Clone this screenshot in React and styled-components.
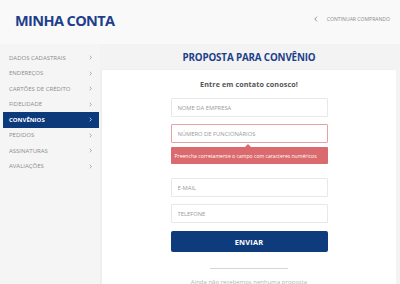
import React from 'react'
import styled, { createGlobalStyle } from 'styled-components'

const GlobalStyle = createGlobalStyle`
  html, body {
    margin: 0;
    padding: 0;
  }
  body {
    width: 400px;
    height: 284px;
    overflow: hidden;
    font-family: "Open Sans", "Liberation Sans", sans-serif;
    background: #f3f3f3;
  }
`

const Page = styled.div`
  width: 400px;
  height: 284px;
  display: flex;
  flex-direction: column;
`

const Header = styled.header`
  height: 44px;
  flex: none;
  background: #f9f9fa;
  display: flex;
  align-items: center;
  justify-content: space-between;
  padding: 0 10px 0 15px;
  box-sizing: border-box;
`

const Title = styled.h1`
  margin: 0 0 3px;
  font-size: 14.5px;
  font-weight: 700;
  color: #1d3f8b;
  letter-spacing: -0.6px;
`

const BackLink = styled.a`
  display: flex;
  align-items: center;
  gap: 9px;
  font-size: 5.1px;
  color: #8a8a8a;
  margin-bottom: 6px;
  text-transform: uppercase;
  svg {
    width: 4px;
    height: 6px;
  }
`

const Body = styled.div`
  flex: 1;
  display: flex;
  background: #f3f3f3;
  min-height: 0;
`

const Sidebar = styled.nav`
  width: 100px;
  flex: none;
  padding-top: 6px;
  display: flex;
  flex-direction: column;
  background: #f5f5f5;
`

const NavItem = styled.div`
  height: 15.5px;
  margin-left: 3px;
  width: 96px;
  box-sizing: border-box;
  padding: 0 6px 0 6px;
  display: flex;
  align-items: center;
  justify-content: space-between;
  font-size: 6px;
  letter-spacing: 0;
  text-transform: uppercase;
  background: ${p => (p.$active ? '#0c3a7b' : 'transparent')};
  color: ${p => (p.$active ? '#ffffff' : '#8d8d8d')};
  font-weight: ${p => (p.$active ? 700 : 400)};
  svg {
    width: 3px;
    height: 5px;
    margin-right: 1px;
  }
`

const Main = styled.main`
  flex: 1;
  display: flex;
  flex-direction: column;
  margin: 0 4px 0 2px;
  min-width: 0;
`

const SectionTitle = styled.h2`
  height: 26px;
  flex: none;
  margin: 0;
  display: flex;
  align-items: center;
  justify-content: center;
  font-size: 9.8px;
  font-weight: 700;
  color: #1d3f8b;
  letter-spacing: -0.15px;
`

const Panel = styled.section`
  flex: 1;
  background: #ffffff;
  display: flex;
  flex-direction: column;
  align-items: center;
  padding-top: 9px;
  box-shadow: -1px 0 2px rgba(0, 0, 0, 0.04);
`

const Lead = styled.p`
  margin: 0 0 9px;
  font-size: 7.2px;
  font-weight: 700;
  color: #555555;
  letter-spacing: 0.1px;
`

const Form = styled.form`
  width: 157px;
  display: flex;
  flex-direction: column;
  gap: 7px;
`

const Field = styled.input`
  height: 19px;
  box-sizing: border-box;
  border: 1px solid ${p => (p.$error ? '#e2a3a5' : '#e8e8e8')};
  border-radius: 1px;
  padding: 0 6px;
  font-family: inherit;
  font-size: 5.8px;
  color: #555;
  outline: none;
  background: #fff;
  &::placeholder {
    color: #9a9a9a;
    text-transform: uppercase;
  }
`

const ErrorTip = styled.div`
  position: relative;
  margin: -3px 0 7px;
  height: 17px;
  background: #da6a6d;
  color: #fff;
  font-size: 5.1px;
  display: flex;
  align-items: center;
  padding: 0 4px;
  box-sizing: border-box;
  border-radius: 1px;
  &::before {
    content: '';
    position: absolute;
    top: -3px;
    left: 74px;
    border-left: 3px solid transparent;
    border-right: 3px solid transparent;
    border-bottom: 3px solid #da6a6d;
  }
`

const Submit = styled.button`
  height: 21px;
  border: none;
  border-radius: 2px;
  background: #0d3b7c;
  color: #fff;
  font-family: inherit;
  font-weight: 700;
  font-size: 7.4px;
  letter-spacing: 0.2px;
  margin-top: 1px;
`

const Divider = styled.hr`
  width: 78px;
  border: none;
  border-top: 1px solid #d6d6d6;
  margin: 16px 0 9px;
`

const Note = styled.p`
  margin: 0;
  font-size: 6px;
  color: #b5b5b5;
`

const Chevron = ({ dir = 'right' }) => (
  <svg viewBox="0 0 4 6" fill="none" stroke="currentColor" strokeWidth="0.9">
    {dir === 'right' ? <path d="M1 0.6 L3.2 3 L1 5.4" /> : <path d="M3 0.6 L0.8 3 L3 5.4" />}
  </svg>
)

const menu = [
  'Dados cadastrais',
  'Endereços',
  'Cartões de crédito',
  'Fidelidade',
  'Convênios',
  'Pedidos',
  'Assinaturas',
  'Avaliações',
]

export default function App() {
  return (
    <Page>
      <GlobalStyle />
      <Header>
        <Title>MINHA CONTA</Title>
        <BackLink>
          <Chevron dir="left" />
          Continuar comprando
        </BackLink>
      </Header>
      <Body>
        <Sidebar>
          {menu.map(item => (
            <NavItem key={item} $active={item === 'Convênios'}>
              {item}
              <Chevron />
            </NavItem>
          ))}
        </Sidebar>
        <Main>
          <SectionTitle>PROPOSTA PARA CONVÊNIO</SectionTitle>
          <Panel>
            <Lead>Entre em contato conosco!</Lead>
            <Form onSubmit={e => e.preventDefault()}>
              <Field placeholder="Nome da empresa" />
              <Field $error placeholder="Número de funcionários" />
              <ErrorTip>Preencha corretamente o campo com caracteres numéricos</ErrorTip>
              <Field placeholder="E-mail" />
              <Field placeholder="Telefone" />
              <Submit type="submit">ENVIAR</Submit>
            </Form>
            <Divider />
            <Note>Ainda não recebemos nenhuma proposta</Note>
          </Panel>
        </Main>
      </Body>
    </Page>
  )
}
